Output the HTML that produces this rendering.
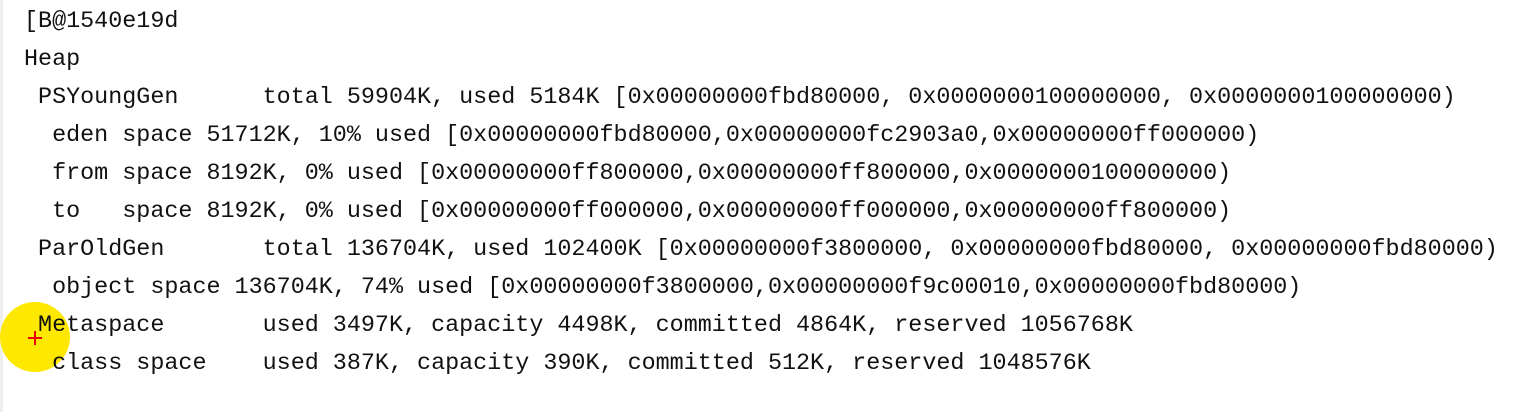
<!DOCTYPE html>
<html><head><style>
html,body{margin:0;padding:0;background:#fff;width:1516px;height:412px;overflow:hidden;position:relative}
.strip{position:absolute;left:0;top:0;width:3px;height:412px;background:#eee}
pre{position:absolute;left:24px;top:3px;margin:0;font-family:"Liberation Mono",monospace;font-size:23.4px;line-height:38px;color:#111;letter-spacing:0}
.c{position:absolute;left:0;top:302px;width:70px;height:70px;border-radius:50%;background:#ffe800}
.p{position:absolute;left:28px;top:337px;width:14px;height:2px;background:#e00}
.q{position:absolute;left:34px;top:331px;width:2px;height:14px;background:#e00}
</style></head><body>
<div class="strip"></div>
<div class="c"></div>
<pre>[B@1540e19d
Heap
 PSYoungGen      total 59904K, used 5184K [0x00000000fbd80000, 0x0000000100000000, 0x0000000100000000)
  eden space 51712K, 10% used [0x00000000fbd80000,0x00000000fc2903a0,0x00000000ff000000)
  from space 8192K, 0% used [0x00000000ff800000,0x00000000ff800000,0x0000000100000000)
  to   space 8192K, 0% used [0x00000000ff000000,0x00000000ff000000,0x00000000ff800000)
 ParOldGen       total 136704K, used 102400K [0x00000000f3800000, 0x00000000fbd80000, 0x00000000fbd80000)
  object space 136704K, 74% used [0x00000000f3800000,0x00000000f9c00010,0x00000000fbd80000)
 Metaspace       used 3497K, capacity 4498K, committed 4864K, reserved 1056768K
  class space    used 387K, capacity 390K, committed 512K, reserved 1048576K</pre>
<div class="p"></div><div class="q"></div>
</body></html>
